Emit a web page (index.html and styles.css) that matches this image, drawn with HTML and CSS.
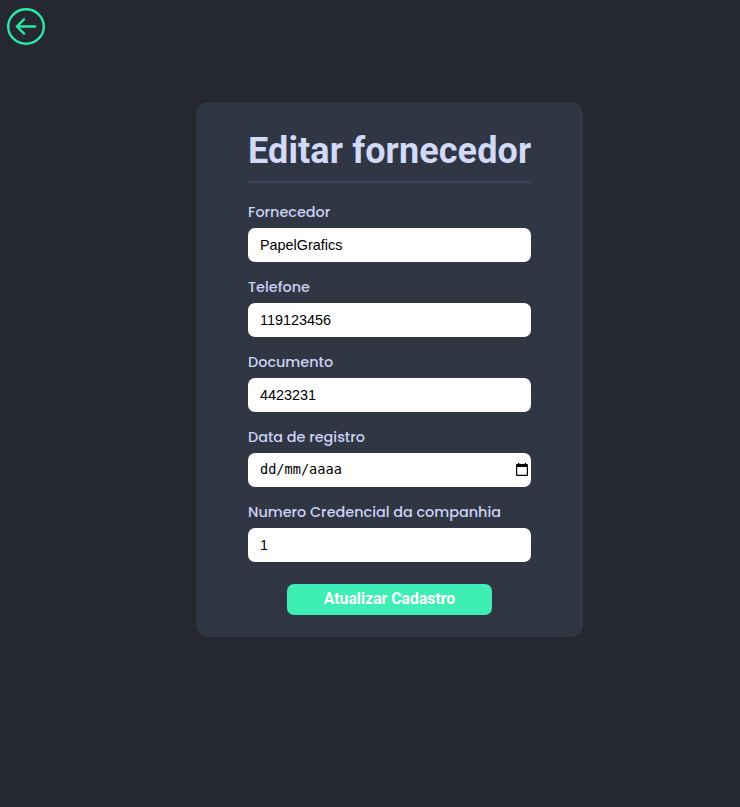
FILE: index.html
```html
<!DOCTYPE html>
<html lang="pt-BR">
<head>
<meta charset="utf-8">
<title>Editar fornecedor</title>
<link rel="stylesheet" href="styles.css">
</head>
<body>
<a class="back" href="#" aria-label="Voltar">
<svg width="38" height="38" viewBox="0 0 38 38" fill="none" stroke="#2ae8a5" stroke-width="2.4" stroke-linecap="round" stroke-linejoin="round"><ellipse cx="19" cy="18.5" rx="17.8" ry="17.3"/><path d="M28 18.5H10M17 11.3L9.8 18.5L17 25.7"/></svg>
</a>
<form class="card">
<h1 class="title">Editar fornecedor</h1>
<div class="field"><label class="label" for="f1">Fornecedor</label><input class="input" id="f1" value="PapelGrafics"></div>
<div class="field"><label class="label" for="f2">Telefone</label><input class="input" id="f2" value="119123456"></div>
<div class="field"><label class="label" for="f3">Documento</label><input class="input" id="f3" value="4423231"></div>
<div class="field"><span class="label">Data de registro</span>
<div class="input date"><span>dd/mm/aaaa</span><svg width="12" height="13" viewBox="0 0 12 13" fill="#000"><path fill-rule="evenodd" d="M2 0H3.3V1H8.7V0H10V1H11Q12 1 12 2V12Q12 13 11 13H1Q0 13 0 12V2Q0 1 1 1H2ZM1.2 4V11.8H10.8V4Z"/></svg></div></div>
<div class="field"><label class="label" for="f5">Numero Credencial da companhia</label><input class="input" id="f5" value="1"></div>
<button class="submit" type="button">Atualizar Cadastro</button>
</form>
</body>
</html>
```
FILE: styles.css
```css
* { box-sizing: border-box; }
body { margin: 0; min-height: 807px; background: #252731; padding: 8px 7px 0; overflow: hidden; }
.back { display: block; width: 38px; height: 38px; }
.back svg { display: block; }
.card { display: flex; flex-direction: column; width: 387px; height: 535px; margin: 56px 0 0 189px; padding: 26px 52px 0; border-radius: 12px; background: #303644; }
.title { margin: 0 0 19px; height: 55px; border-bottom: 2px solid #3e4160; color: #d3d9f8; font: 700 36px/47px Roboto, sans-serif; letter-spacing: 0.12px; white-space: nowrap; }
.field { height: 75px; }
.label { display: block; height: 26px; color: #ccd2f4; font: 500 14.4px/20px Poppins, Inter, sans-serif; white-space: nowrap; }
.input { display: block; width: 100%; height: 34px; border: 0; border-radius: 7px; background: #fff; padding: 0 12px; color: #000; font: 14.4px "Liberation Sans", Arial, sans-serif; outline: 0; }
.date { display: flex; align-items: center; justify-content: space-between; padding: 0 3px 2px 12px; font: 13.6px "DejaVu Sans Mono", monospace; }
.submit { align-self: center; width: 205px; height: 31px; margin-top: 7px; border: 0; border-radius: 7px; padding: 0 0 2px; background: #3eeeb4; color: #fff; font: 700 15.75px/29px Roboto, sans-serif; }
```
